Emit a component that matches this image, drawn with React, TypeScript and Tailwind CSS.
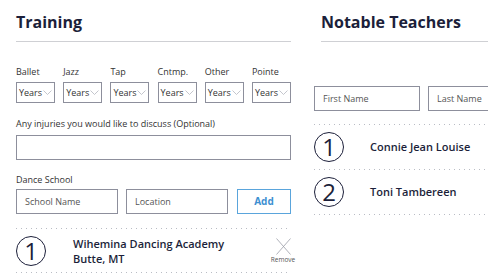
import React from "react";

const dots =
  "h-px w-full bg-[linear-gradient(to_right,#b9bcc4_1px,transparent_1px)] bg-[length:5px_1px]";

function Circle({ n }: { n: number }) {
  return (
    <div className="flex h-[30px] w-[30px] shrink-0 items-center justify-center rounded-full border-[1.5px] border-[#1c1f3a] text-[24px] font-medium leading-none text-[#1c1f3a]">
      {n}
    </div>
  );
}

function Select({ label }: { label: string }) {
  return (
    <div className="flex w-[39px] flex-col">
      <div className="text-[9px] leading-[12px] text-[#333]">{label}</div>
      <div className="mt-[4px] flex h-[21px] items-center justify-between border border-[#8d8f9c] pl-[2px] pr-[2px]">
        <span className="text-[9px] text-[#333]">Years</span>
        <svg width="9" height="6" viewBox="0 0 9 6" className="mt-[1px]">
          <path d="M0.5 0.5 L4.5 4.5 L8.5 0.5" fill="none" stroke="#b5b7c0" strokeWidth="0.8" />
        </svg>
      </div>
    </div>
  );
}

function Field({ placeholder, className }: { placeholder: string; className?: string }) {
  return (
    <div
      className={
        "flex h-[25px] items-center border border-[#8d8f9c] px-[8px] text-[9px] text-[#555] " +
        (className ?? "")
      }
    >
      {placeholder}
    </div>
  );
}

export default function App() {
  return (
    <div className="flex h-[276px] w-[488px] overflow-hidden bg-white font-['Open_Sans',sans-serif] text-[#1c1f3a]">
      <div className="ml-[16px] flex w-[275px] shrink-0 flex-col">
        <div className="mt-[11px] border-b border-[#cfd0d4] pb-[8px] text-[16px] font-bold leading-[22px]">
          Training
        </div>
        <div className="mt-[24px] flex justify-between">
          {["Ballet", "Jazz", "Tap", "Cntmp.", "Other", "Pointe"].map((l) => (
            <Select key={l} label={l} />
          ))}
        </div>
        <div className="mt-[15px] text-[9px] leading-[12px] text-[#333]">
          Any injuries you would like to discuss (Optional)
        </div>
        <div className="mt-[5px] h-[25px] border border-[#8d8f9c]" />
        <div className="mt-[14px] text-[9px] leading-[12px] text-[#333]">Dance School</div>
        <div className="mt-[3px] flex gap-[8px]">
          <Field placeholder="School Name" className="w-[102px]" />
          <Field placeholder="Location" className="w-[102px]" />
          <div className="ml-[1px] flex h-[25px] flex-1 items-center justify-center border-[1.5px] border-[#5aa5dc] text-[10px] font-bold text-[#3d8fd1]">
            Add
          </div>
        </div>
        <div className={"mt-[14px] " + dots} />
        <div className="flex h-[43px] items-center">
          <Circle n={1} />
          <div className="ml-[27px] flex-1 text-[11px] font-semibold leading-[15px]">
            <div>Wihemina Dancing Academy</div>
            <div>Butte, MT</div>
          </div>
          <div className="mr-[-8px] flex w-[32px] flex-col items-center">
            <svg width="15" height="17" viewBox="0 0 15 17">
              <path d="M0.5 0.5 L14.5 16.5 M14.5 0.5 L0.5 16.5" stroke="#9c9ea8" strokeWidth="0.8" fill="none" />
            </svg>
            <span className="mt-[1px] text-[6.5px] leading-[8px] text-[#555]">Remove</span>
          </div>
        </div>
        <div className={dots} />
      </div>

      <div className="ml-[23px] flex w-[260px] shrink-0 flex-col">
        <div className="ml-[7px] mt-[11px] border-b border-[#cfd0d4] pb-[8px] text-[16px] font-bold leading-[22px]">
          Notable Teachers
        </div>
        <div className="mt-[44px] flex gap-[8px]">
          <Field placeholder="First Name" className="w-[106px]" />
          <Field placeholder="Last Name" className="w-[106px]" />
        </div>
        <div className={"mt-[13px] " + dots} />
        {["Connie Jean Louise", "Toni Tambereen"].map((name, i) => (
          <React.Fragment key={name}>
            <div className="flex h-[44px] items-center">
              <Circle n={i + 1} />
              <div className="ml-[26px] text-[11px] font-semibold">{name}</div>
            </div>
            <div className={dots} />
          </React.Fragment>
        ))}
      </div>
    </div>
  );
}
